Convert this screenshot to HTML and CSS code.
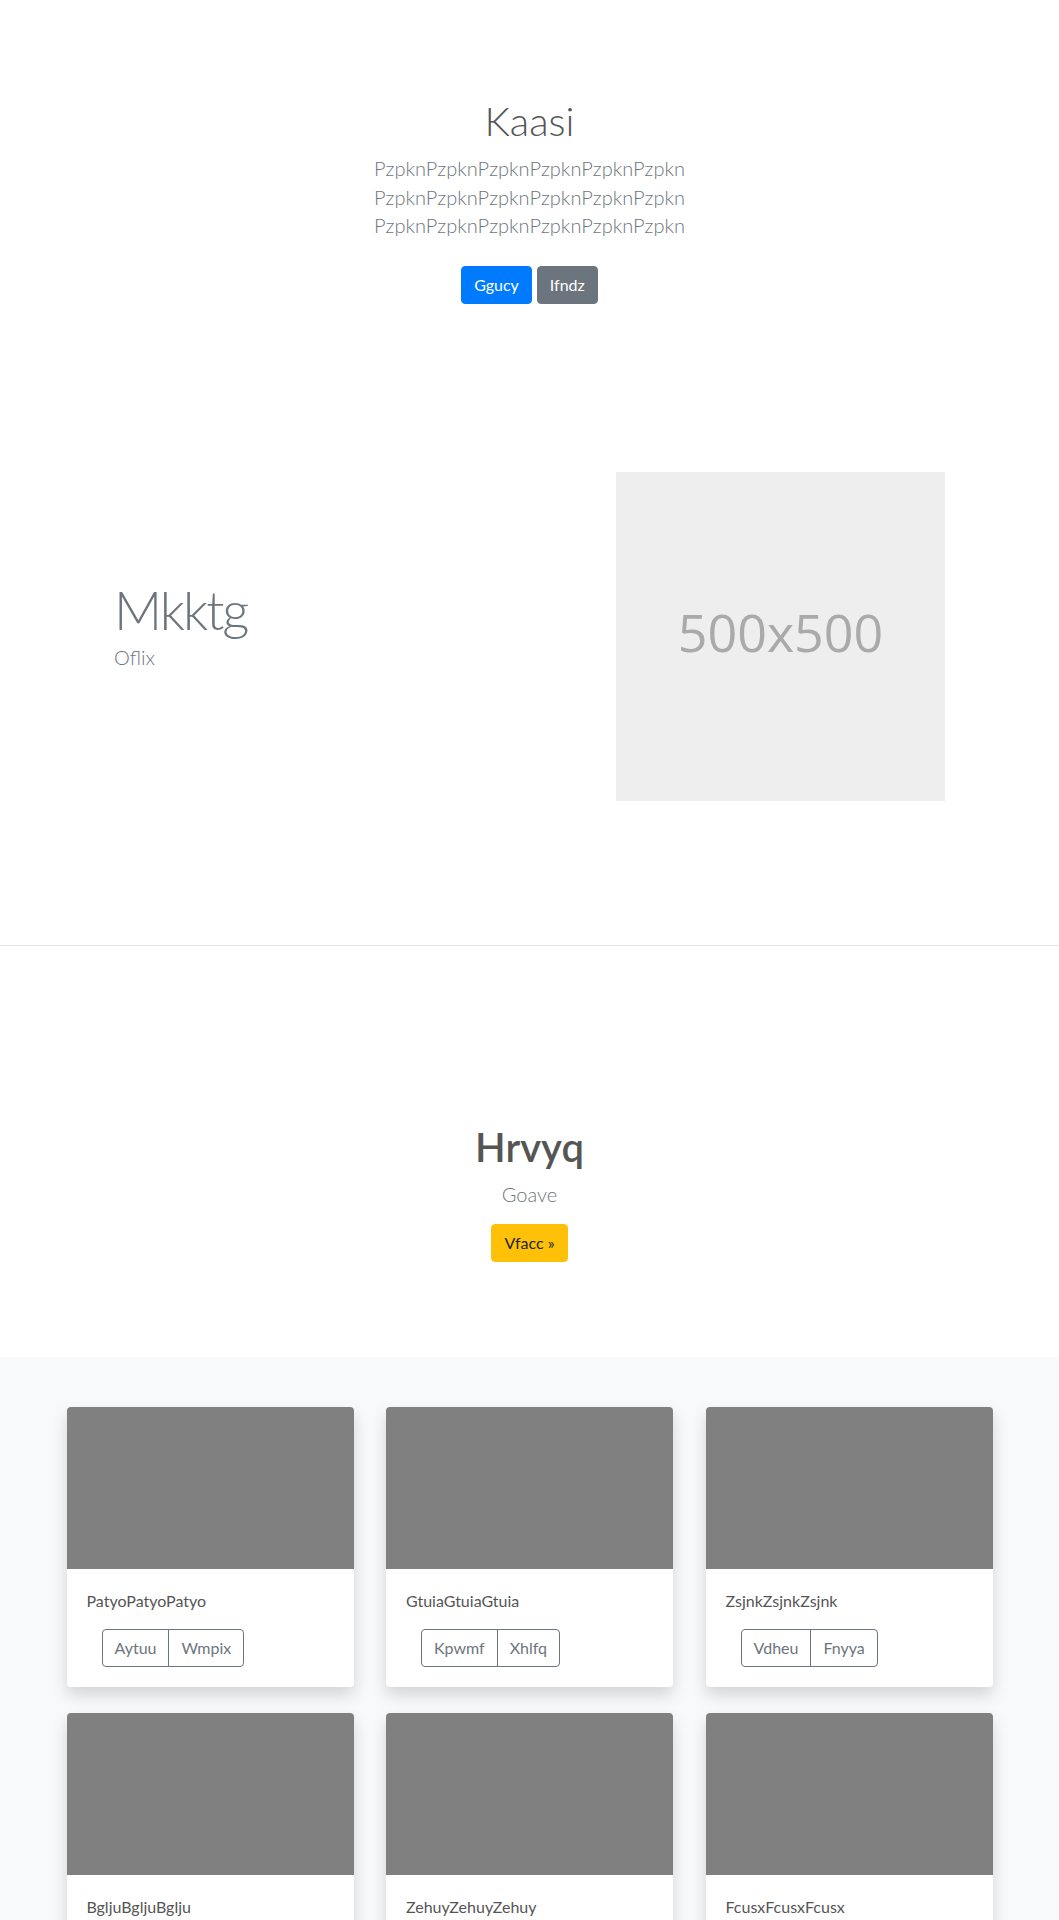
FILE: index.html
```html
<!DOCTYPE html>
<html lang="en">
<head>
<meta charset="utf-8">
<title>Kaasi</title>
<link rel="stylesheet" href="styles.css">
</head>
<body>
<section class="hero">
  <h1 class="hero-title">Kaasi</h1>
  <p class="lead hero-lead">PzpknPzpknPzpknPzpknPzpknPzpkn<br>PzpknPzpknPzpknPzpknPzpknPzpkn<br>PzpknPzpknPzpknPzpknPzpknPzpkn</p>
  <div class="hero-actions">
    <a class="btn btn-primary" href="#">Ggucy</a>
    <a class="btn btn-secondary" href="#">Ifndz</a>
  </div>
</section>

<section class="feature">
  <div class="feature-row">
    <div class="feature-text">
      <h2 class="feature-title">Mkktg</h2>
      <p class="lead feature-lead">Oflix</p>
    </div>
    <div class="placeholder"><span>500x500</span></div>
  </div>
</section>

<section class="cta">
  <h2 class="cta-title">Hrvyq</h2>
  <p class="lead cta-lead">Goave</p>
  <a class="btn btn-warning" href="#">Vfacc »</a>
</section>

<section class="album">
  <div class="album-grid">
    <div class="card">
      <div class="card-img"></div>
      <div class="card-body">
        <p class="card-text">PatyoPatyoPatyo</p>
        <div class="card-actions">
          <div class="btn-group"><a class="btn btn-outline" href="#">Aytuu</a><a class="btn btn-outline" href="#">Wmpix</a></div>
        </div>
      </div>
    </div>
    <div class="card">
      <div class="card-img"></div>
      <div class="card-body">
        <p class="card-text">GtuiaGtuiaGtuia</p>
        <div class="card-actions">
          <div class="btn-group"><a class="btn btn-outline" href="#">Kpwmf</a><a class="btn btn-outline" href="#">Xhlfq</a></div>
        </div>
      </div>
    </div>
    <div class="card">
      <div class="card-img"></div>
      <div class="card-body">
        <p class="card-text">ZsjnkZsjnkZsjnk</p>
        <div class="card-actions">
          <div class="btn-group"><a class="btn btn-outline" href="#">Vdheu</a><a class="btn btn-outline" href="#">Fnyya</a></div>
        </div>
      </div>
    </div>
    <div class="card">
      <div class="card-img"></div>
      <div class="card-body">
        <p class="card-text">BgljuBgljuBglju</p>
        <div class="card-actions">
          <div class="btn-group"><a class="btn btn-outline" href="#">Qwert</a><a class="btn btn-outline" href="#">Mnbvc</a></div>
        </div>
      </div>
    </div>
    <div class="card">
      <div class="card-img"></div>
      <div class="card-body">
        <p class="card-text">ZehuyZehuyZehuy</p>
        <div class="card-actions">
          <div class="btn-group"><a class="btn btn-outline" href="#">Lkjhg</a><a class="btn btn-outline" href="#">Poiuy</a></div>
        </div>
      </div>
    </div>
    <div class="card">
      <div class="card-img"></div>
      <div class="card-body">
        <p class="card-text">FcusxFcusxFcusx</p>
        <div class="card-actions">
          <div class="btn-group"><a class="btn btn-outline" href="#">Asdfg</a><a class="btn btn-outline" href="#">Zxcvb</a></div>
        </div>
      </div>
    </div>
  </div>
</section>
</body>
</html>
```

FILE: styles.css
```css
* { box-sizing: border-box; }

html, body {
  margin: 0;
  padding: 0;
  background: #fff;
}

body {
  font-family: Lato, "Open Sans", "Noto Sans", sans-serif;
  font-size: 16px;
  line-height: 1.5;
  color: #212529;
}

p, h1, h2 { margin: 0; }

.lead {
  font-size: 20px;
  font-weight: 300;
  color: #6c757d;
}

/* buttons */
.btn {
  display: inline-block;
  height: 38px;
  padding: 6px 12px;
  font-size: 16px;
  line-height: 24px;
  border: 1px solid transparent;
  border-radius: 4px;
  text-decoration: none;
  text-align: center;
  white-space: nowrap;
}
.btn-primary { background: #007bff; border-color: #007bff; color: #fff; }
.btn-secondary { background: #6c757d; border-color: #6c757d; color: #fff; }
.btn-warning { background: #ffc107; border-color: #ffc107; color: #212529; }
.btn-outline { background: transparent; border-color: #6c757d; color: #6c757d; }

/* hero */
.hero {
  text-align: center;
  padding: 97px 16px 24px;
}
.hero-title {
  font-size: 40px;
  font-weight: 300;
  line-height: 48px;
  color: #555;
  margin-bottom: 9px;
}
.hero-lead {
  line-height: 28.5px;
}
.hero-actions {
  display: flex;
  justify-content: center;
  gap: 5px;
  margin-top: 26px;
}

/* feature */
.feature {
  padding: 144px 114px;
  border-bottom: 1px solid #e5e5e5;
}
.feature-row {
  display: grid;
  grid-template-columns: 1fr 1fr;
  align-items: start;
}
.feature-text {
  padding-top: 106px;
}
.feature-title {
  font-size: 53px;
  font-weight: 300;
  line-height: 64px;
  letter-spacing: -2px;
  color: #6c757d;
}
.feature-lead {
  line-height: 30px;
}
.placeholder {
  justify-self: end;
  width: 329px;
  height: 329px;
  background: #eee;
  display: flex;
  align-items: center;
  justify-content: center;
  padding-bottom: 9px;
}
.placeholder span {
  font-family: "Open Sans", "Noto Sans", sans-serif;
  font-size: 52px;
  color: #aaa;
  line-height: 1;
}

/* cta */
.cta {
  text-align: center;
  padding: 177px 16px 95px;
}
.cta-title {
  font-size: 40px;
  font-weight: 600;
  line-height: 48px;
  color: #555;
  margin-bottom: 8px;
}
.cta-lead {
  line-height: 30px;
  margin-bottom: 15px;
}

/* album */
.album {
  background: #f8f9fa;
  padding: 50px 0 48px;
}
.album-grid {
  width: 926px;
  margin: 0 auto;
  display: grid;
  grid-template-columns: repeat(3, 287px);
  column-gap: 32.5px;
  row-gap: 26px;
}
.card {
  background: #fff;
  border-radius: 4px;
  overflow: hidden;
  box-shadow: 0 8px 16px rgba(0, 0, 0, 0.15);
}
.card-img {
  height: 162px;
  background: #808080;
}
.card-body {
  padding: 20px;
}
.card-text {
  font-size: 16px;
  line-height: 24px;
  color: #555;
  margin-bottom: 16px;
}
.card-actions {
  padding-left: 15px;
}
.btn-group {
  display: inline-flex;
}
.btn-group .btn:first-child {
  border-top-right-radius: 0;
  border-bottom-right-radius: 0;
}
.btn-group .btn + .btn {
  margin-left: -1px;
  border-top-left-radius: 0;
  border-bottom-left-radius: 0;
}
```
